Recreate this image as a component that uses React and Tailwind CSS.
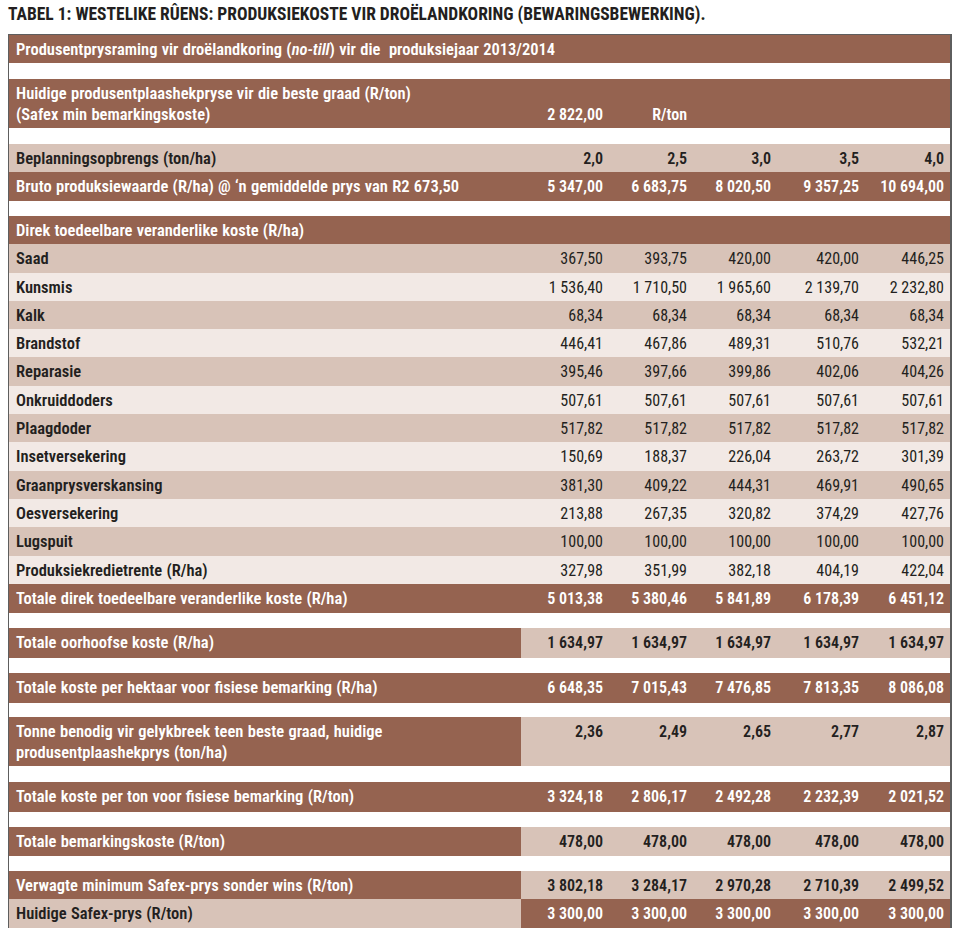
const BROWN = "bg-[#956350]";
const TAN = "bg-[#d8c3b8]";
const LIGHT = "bg-[#f2e9e5]";

const COLS = "grid grid-cols-[512px_88px_84px_84px_88px_85px]";

function Cell({ bg, dark, bold, children, right, text, span }) {
  const color = dark ? "text-[#231f20]" : "text-white";
  const side = right
    ? "text-right pr-[6px] text-[16px]"
    : "pl-[7px] text-[16.5px] [word-spacing:0.5px]";
  return (
    <div
      className={`${bg} ${color} ${span ? "col-span-6" : ""} ${side} ${bold ? "font-semibold" : "font-normal"} ${text} whitespace-nowrap`}
    >
      {children}
    </div>
  );
}

function Row({
  h,
  text,
  vtext,
  label,
  values = [],
  labelBg,
  valueBg,
  labelDark,
  valueDark,
  valueBold = true,
}) {
  const vb = valueBg || labelBg;
  const vd = valueDark === undefined ? labelDark : valueDark;
  if (!values.length) {
    return (
      <div className={`${COLS} ${h}`}>
        <Cell bg={labelBg} dark={labelDark} bold text={text} span>
          {label}
        </Cell>
      </div>
    );
  }
  return (
    <div className={`${COLS} ${h}`}>
      <Cell bg={labelBg} dark={labelDark} bold text={text}>
        {label}
      </Cell>
      {values.map((v, i) => (
        <Cell key={i} bg={vb} dark={vd} bold={valueBold} right text={vtext || text}>
          {v}
        </Cell>
      ))}
    </div>
  );
}

function Gap({ h = "h-4" }) {
  return <div className={`bg-white ${h}`} />;
}

const items = [
  ["Saad", ["367,50", "393,75", "420,00", "420,00", "446,25"]],
  ["Kunsmis", ["1 536,40", "1 710,50", "1 965,60", "2 139,70", "2 232,80"]],
  ["Kalk", ["68,34", "68,34", "68,34", "68,34", "68,34"]],
  ["Brandstof", ["446,41", "467,86", "489,31", "510,76", "532,21"]],
  ["Reparasie", ["395,46", "397,66", "399,86", "402,06", "404,26"]],
  ["Onkruiddoders", ["507,61", "507,61", "507,61", "507,61", "507,61"]],
  ["Plaagdoder", ["517,82", "517,82", "517,82", "517,82", "517,82"]],
  ["Insetversekering", ["150,69", "188,37", "226,04", "263,72", "301,39"]],
  ["Graanprysverskansing", ["381,30", "409,22", "444,31", "469,91", "490,65"]],
  ["Oesversekering", ["213,88", "267,35", "320,82", "374,29", "427,76"]],
  ["Lugspuit", ["100,00", "100,00", "100,00", "100,00", "100,00"]],
  ["Produksiekredietrente (R/ha)", ["327,98", "351,99", "382,18", "404,19", "422,04"]],
];

const ROW28 = "h-[28px]";
const TXT28 = "leading-[28px] pt-px";
const ROW283 = "h-[28.3px]";
const TXT283 = "leading-[28.3px] pt-px";
const ROW49 = "h-[49px]";
const TXT2L = "leading-[21px] pt-[4px]";

export default function App() {
  return (
    <div className="bg-white w-[960px] h-[938px] font-['Roboto',sans-serif] [font-stretch:75%]">
      <div className="pl-2 pt-[4px] h-[34px] text-[17.5px] leading-[20px] font-bold text-[#231f20]">
        TABEL 1: WESTELIKE RÛENS: PRODUKSIEKOSTE VIR DROËLANDKORING (BEWARINGSBEWERKING).
      </div>
      <div className="ml-2 w-[944px] border-t border-b border-l border-r-2 border-[#5e5e5e]">
        <Row
          h="h-[27px]"
          text="leading-[27px] pt-px"
          labelBg={BROWN}
          label={
            <>
              Produsentprysraming vir droëlandkoring (<i>no-till</i>) vir die&nbsp; produksiejaar 2013/2014
            </>
          }
        />
        <Gap h="h-[17px]" />
        <Row
          h={ROW49}
          text={TXT2L}
          vtext="leading-[21px] pt-[25px]"
          labelBg={BROWN}
          label={
            <>
              Huidige produsentplaashekpryse vir die beste graad (R/ton)
              <br />
              (Safex min bemarkingskoste)
            </>
          }
          values={["2 822,00", "R/ton", "", "", ""]}
        />
        <Gap />
        <Row
          h={ROW28}
          text={TXT28}
          labelBg={TAN}
          labelDark
          label="Beplanningsopbrengs (ton/ha)"
          values={["2,0", "2,5", "3,0", "3,5", "4,0"]}
        />
        <Row
          h={ROW28}
          text={TXT28}
          labelBg={BROWN}
          label="Bruto produksiewaarde (R/ha) @ ‘n gemiddelde prys van R2 673,50"
          values={["5 347,00", "6 683,75", "8 020,50", "9 357,25", "10 694,00"]}
        />
        <Gap />
        <Row h={ROW283} text={TXT283} labelBg={BROWN} label="Direk toedeelbare veranderlike koste (R/ha)" />
        {items.map(([l, v], i) => (
          <Row
            key={l}
            h={ROW283}
            text={TXT283}
            labelBg={i % 2 === 0 ? TAN : LIGHT}
            labelDark
            valueBold={false}
            label={l}
            values={v}
          />
        ))}
        <Row
          h={ROW283}
          text={TXT283}
          labelBg={BROWN}
          label="Totale direk toedeelbare veranderlike koste (R/ha)"
          values={["5 013,38", "5 380,46", "5 841,89", "6 178,39", "6 451,12"]}
        />
        <Gap />
        <Row
          h="h-[28.6px]"
          text="leading-[28.6px] pt-px"
          labelBg={BROWN}
          valueBg={TAN}
          valueDark
          label="Totale oorhoofse koste (R/ha)"
          values={["1 634,97", "1 634,97", "1 634,97", "1 634,97", "1 634,97"]}
        />
        <Gap />
        <Row
          h="h-[28.8px]"
          text="leading-[28.8px] pt-px"
          labelBg={BROWN}
          label="Totale koste per hektaar voor fisiese bemarking (R/ha)"
          values={["6 648,35", "7 015,43", "7 476,85", "7 813,35", "8 086,08"]}
        />
        <Gap h="h-[15.5px]" />
        <Row
          h={ROW49}
          text={TXT2L}
          labelBg={BROWN}
          valueBg={TAN}
          valueDark
          label={
            <>
              Tonne benodig vir gelykbreek teen beste graad, huidige
              <br />
              produsentplaashekprys (ton/ha)
            </>
          }
          values={["2,36", "2,49", "2,65", "2,77", "2,87"]}
        />
        <Gap />
        <Row
          h="h-[28.8px]"
          text="leading-[28.8px] pt-px"
          labelBg={BROWN}
          label="Totale koste per ton voor fisiese bemarking (R/ton)"
          values={["3 324,18", "2 806,17", "2 492,28", "2 232,39", "2 021,52"]}
        />
        <Gap />
        <Row
          h={ROW283}
          text={TXT283}
          labelBg={BROWN}
          valueBg={TAN}
          valueDark
          label="Totale bemarkingskoste (R/ton)"
          values={["478,00", "478,00", "478,00", "478,00", "478,00"]}
        />
        <Gap />
        <Row
          h={ROW28}
          text={TXT28}
          labelBg={BROWN}
          valueBg={TAN}
          valueDark
          label="Verwagte minimum Safex-prys sonder wins (R/ton)"
          values={["3 802,18", "3 284,17", "2 970,28", "2 710,39", "2 499,52"]}
        />
        <Row
          h={ROW28}
          text={TXT28}
          labelBg={TAN}
          labelDark
          valueBg={BROWN}
          valueDark={false}
          label="Huidige Safex-prys (R/ton)"
          values={["3 300,00", "3 300,00", "3 300,00", "3 300,00", "3 300,00"]}
        />
      </div>
    </div>
  );
}
